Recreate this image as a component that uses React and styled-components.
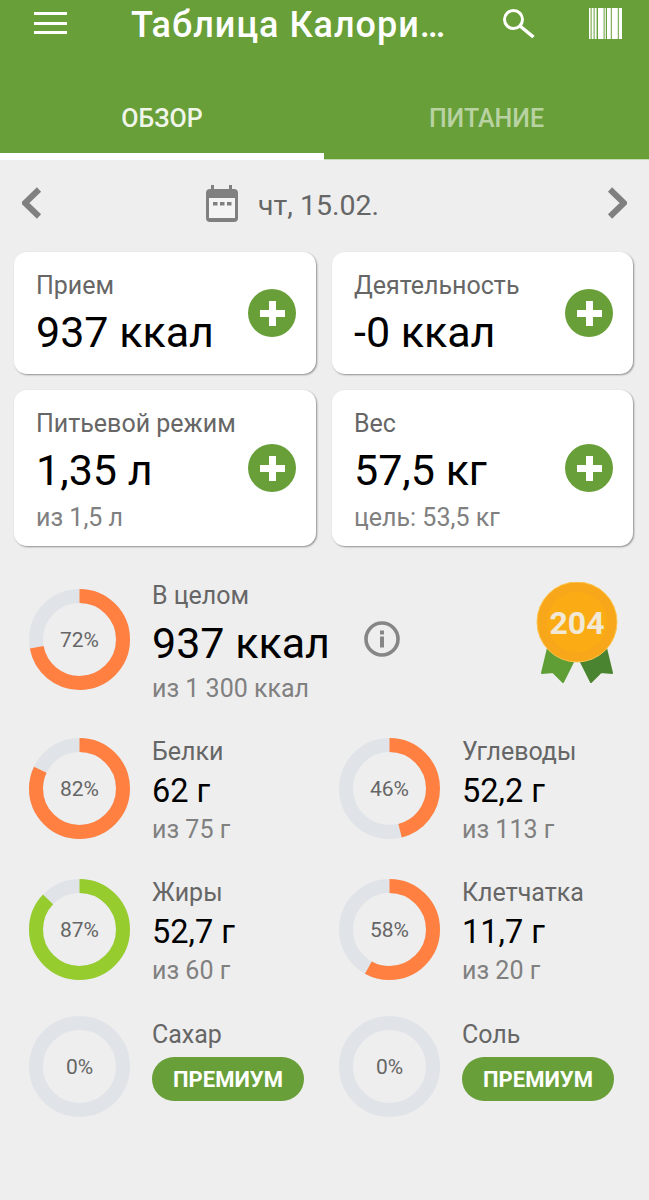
import React from 'react';
import styled, { createGlobalStyle } from 'styled-components';

const GlobalStyle = createGlobalStyle`
  html, body {
    margin: 0;
    padding: 0;
    background: #eeeeee;
  }
  * {
    box-sizing: border-box;
  }
`;

const Page = styled.div`
  width: 649px;
  min-height: 1200px;
  overflow: hidden;
  background: #eeeeee;
  font-family: "Roboto", "Liberation Sans", sans-serif;
`;

const Header = styled.header`
  background: #689f38;
  height: 160px;
  display: flex;
  flex-direction: column;
`;

const TopBar = styled.div`
  height: 50px;
  display: flex;
  align-items: center;
`;

const MenuButton = styled.div`
  margin-left: 34px;
  margin-top: -4px;
  width: 33px;
  height: 22px;
  display: flex;
  flex-direction: column;
  justify-content: space-between;
  > span {
    height: 3px;
    background: #fff;
  }
`;

const Title = styled.div`
  margin-left: 64px;
  width: 372px;
  color: #fff;
  font-size: 36px;
  font-weight: 500;
  letter-spacing: 1px;
  white-space: nowrap;
`;

const BarIcon = styled.svg`
  display: block;
  flex: none;
  margin-top: ${p => p.$top || 0}px;
  margin-left: ${p => p.$left || 0}px;
`;

const Tabs = styled.div`
  flex: 1;
  display: flex;
`;

const Tab = styled.div`
  width: ${p => (p.$active ? 324 : 325)}px;
  display: flex;
  align-items: flex-end;
  justify-content: center;
  color: ${p => (p.$active ? '#f0f5ea' : 'rgba(255, 255, 255, 0.55)')};
  font-size: 25px;
  font-weight: 500;
  line-height: 28px;
  padding-bottom: ${p => (p.$active ? 20 : 26)}px;
  border-bottom: ${p => (p.$active ? '7px solid #ffffff' : '1px solid #c5d9b3')};
`;

const DateRow = styled.div`
  height: 92px;
  padding: 0 22px 6px;
  display: flex;
  align-items: center;
  justify-content: space-between;
`;

const DateLabel = styled.div`
  display: flex;
  align-items: center;
  gap: 20px;
  margin-right: 64px;
  color: #666666;
  font-size: 28.5px;
`;

const DateText = styled.span`
  padding-top: 4px;
`;

const Cards = styled.div`
  padding: 0 16px 0 14px;
  display: grid;
  grid-template-columns: 302px 301px;
  grid-template-rows: 122px 156px;
  gap: 16px;
`;

const Card = styled.div`
  background: #fff;
  border-radius: 13px;
  box-shadow: 1px 1px 2px rgba(0, 0, 0, 0.4);
  padding: 0 20px 0 22px;
  display: flex;
  align-items: center;
  justify-content: space-between;
`;

const CardText = styled.div`
  padding-top: ${p => (p.$tall ? 5 : 3)}px;
`;

const Label = styled.div`
  color: #666666;
  font-size: 25px;
  line-height: 30px;
`;

const CardValue = styled.div`
  color: #000;
  font-size: 43px;
  line-height: 52px;
  margin-top: 5px;
`;

const Sub = styled.div`
  color: #808080;
  font-size: 25px;
  line-height: 30px;
  margin-top: ${p => p.$gap || 0}px;
`;

const PlusButton = styled.div`
  width: 48px;
  height: 48px;
  border-radius: 50%;
  background: #689f38;
  display: flex;
  align-items: center;
  justify-content: center;
  flex: none;
`;

const Summary = styled.div`
  padding: 43px 32px 0 29px;
  display: flex;
  align-items: flex-start;
`;

const SummaryBody = styled.div`
  margin-left: 22px;
  margin-top: -8px;
`;

const SummaryValue = styled.div`
  color: #000;
  font-size: 43px;
  line-height: 52px;
  margin-top: 6px;
  white-space: nowrap;
`;

const InfoIcon = styled.svg`
  display: block;
  flex: none;
  margin: 32px 0 0 34px;
`;

const Badge = styled.svg`
  display: block;
  flex: none;
  margin: -7px -2px 0 auto;
`;

const Nutrients = styled.div`
  padding: 34px 0 0 29px;
  display: grid;
  grid-template-columns: 310px 310px;
  grid-template-rows: 101px 101px 101px;
  row-gap: 40px;
`;

const Nutrient = styled.div`
  display: flex;
  align-items: flex-start;
  margin-top: ${p => (p.$premium ? -4 : 0)}px;
`;

const RingBox = styled.div`
  width: 101px;
  height: 101px;
  flex: none;
  display: grid;
  place-items: center;
  > * {
    grid-area: 1 / 1;
  }
`;

const RingText = styled.span`
  color: #666666;
  font-size: 21px;
`;

const NutrientBody = styled.div`
  margin-left: 22px;
  margin-top: ${p => (p.$premium ? 4 : -1)}px;
`;

const NutrientValue = styled.div`
  color: #000;
  font-size: 32.5px;
  line-height: 40px;
  margin-top: 4px;
`;

const PremiumButton = styled.div`
  margin-top: 7px;
  width: 152px;
  height: 44px;
  border-radius: 22px;
  background: #689f38;
  color: #fff;
  font-size: 22px;
  font-weight: 700;
  display: flex;
  align-items: center;
  justify-content: center;
`;

const Ring = ({ value, color = '#ff8040' }) => {
  const r = 43.5;
  const length = 2 * Math.PI * r;
  return (
    <RingBox>
      <svg width="101" height="101" viewBox="0 0 101 101">
        <circle cx="50.5" cy="50.5" r={r} fill="none" stroke="#e0e4e8" strokeWidth="14" />
        {value > 0 && (
          <circle
            cx="50.5"
            cy="50.5"
            r={r}
            fill="none"
            stroke={color}
            strokeWidth="14"
            strokeDasharray={`${(length * value) / 100} ${length}`}
            transform="rotate(-90 50.5 50.5)"
          />
        )}
      </svg>
      <RingText>{value}%</RingText>
    </RingBox>
  );
};

const Plus = () => (
  <PlusButton>
    <svg width="25" height="25" viewBox="0 0 25 25">
      <path d="M12.5 0v25M0 12.5h25" stroke="#fff" strokeWidth="7" fill="none" />
    </svg>
  </PlusButton>
);

const Chevron = ({ flip }) => (
  <svg width="20" height="32" viewBox="0 0 20 32">
    <path
      d={flip ? 'M3 2.5 17 16 3 29.5' : 'M17 2.5 3 16 17 29.5'}
      stroke="#808080"
      strokeWidth="6"
      fill="none"
    />
  </svg>
);

const nutrients = [
  { name: 'Белки', value: 82, amount: '62 г', goal: 'из 75 г' },
  { name: 'Углеводы', value: 46, amount: '52,2 г', goal: 'из 113 г' },
  { name: 'Жиры', value: 87, amount: '52,7 г', goal: 'из 60 г', color: '#97cc2f' },
  { name: 'Клетчатка', value: 58, amount: '11,7 г', goal: 'из 20 г' },
  { name: 'Сахар', value: 0, premium: true },
  { name: 'Соль', value: 0, premium: true },
];

const barcodeBars = [
  [0, 1.6], [2.6, 2], [5.6, 2], [9, 5.6], [15.6, 1.2], [18, 3.8], [22.8, 6], [29.8, 3.2],
];

export default function App() {
  return (
    <Page>
      <GlobalStyle />
      <Header>
        <TopBar>
          <MenuButton>
            <span />
            <span />
            <span />
          </MenuButton>
          <Title>Таблица Калори…</Title>
          <BarIcon $top={-4} width="32" height="30" viewBox="0 0 32 30">
            <circle cx="10.5" cy="11.5" r="9" stroke="#fff" strokeWidth="3" fill="none" />
            <path d="M17 18 30.5 29" stroke="#fff" strokeWidth="3.5" fill="none" />
          </BarIcon>
          <BarIcon $left={54} $top={-3} width="33" height="31" viewBox="0 0 33 31">
            {barcodeBars.map(([x, w]) => (
              <rect key={x} x={x} y="0" width={w} height="31" fill="#fff" />
            ))}
          </BarIcon>
        </TopBar>
        <Tabs>
          <Tab $active>ОБЗОР</Tab>
          <Tab>ПИТАНИЕ</Tab>
        </Tabs>
      </Header>

      <DateRow>
        <Chevron />
        <DateLabel>
          <svg width="32" height="37" viewBox="0 0 32 37">
            <path
              d="M5 0h3v4h15V0h3v4h2a4 4 0 0 1 4 4v25a4 4 0 0 1-4 4H4a4 4 0 0 1-4-4V8a4 4 0 0 1 4-4h1z"
              fill="#808080"
            />
            <rect x="3" y="13" width="26" height="20" fill="#f4f4f4" />
            <rect x="7" y="17" width="4.5" height="3.5" fill="#808080" />
            <rect x="14" y="17" width="4.5" height="3.5" fill="#808080" />
            <rect x="21" y="17" width="4.5" height="3.5" fill="#808080" />
          </svg>
          <DateText>чт, 15.02.</DateText>
        </DateLabel>
        <Chevron flip />
      </DateRow>

      <Cards>
        <Card>
          <CardText>
            <Label>Прием</Label>
            <CardValue>937 ккал</CardValue>
          </CardText>
          <Plus />
        </Card>
        <Card>
          <CardText>
            <Label>Деятельность</Label>
            <CardValue>-0 ккал</CardValue>
          </CardText>
          <Plus />
        </Card>
        <Card>
          <CardText $tall>
            <Label>Питьевой режим</Label>
            <CardValue>1,35 л</CardValue>
            <Sub $gap={7}>из 1,5 л</Sub>
          </CardText>
          <Plus />
        </Card>
        <Card>
          <CardText $tall>
            <Label>Вес</Label>
            <CardValue>57,5 кг</CardValue>
            <Sub $gap={7}>цель: 53,5 кг</Sub>
          </CardText>
          <Plus />
        </Card>
      </Cards>

      <Summary>
        <Ring value={72} />
        <SummaryBody>
          <Label>В целом</Label>
          <SummaryValue>937 ккал</SummaryValue>
          <Sub $gap={5}>из 1 300 ккал</Sub>
        </SummaryBody>
        <InfoIcon width="36" height="36" viewBox="0 0 36 36">
          <circle cx="18" cy="18" r="16" stroke="#868686" strokeWidth="3.6" fill="none" />
          <rect x="16" y="15.5" width="4" height="11" fill="#868686" />
          <rect x="16" y="9.5" width="4" height="4" fill="#868686" />
        </InfoIcon>
        <Badge width="84" height="102" viewBox="0 0 84 102">
          <path d="M13 66 7 91 18 90 28 100 38 80z" fill="#5f9e35" stroke="#5f9e35" strokeWidth="2" strokeLinejoin="round" />
          <path d="M71 66 77 91 66 90 56 100 46 80z" fill="#4b8430" stroke="#4b8430" strokeWidth="2" strokeLinejoin="round" />
          <circle cx="42" cy="40" r="40" fill="#f8a71a" stroke="#fcc44a" strokeWidth="1" />
          <circle cx="42" cy="40" r="30" fill="#fbac14" />
          <text
            x="42"
            y="51.5"
            textAnchor="middle"
            fontFamily="Roboto, sans-serif"
            fontSize="32"
            fontWeight="700"
            fill="#f1e8d6"
          >
            204
          </text>
        </Badge>
      </Summary>

      <Nutrients>
        {nutrients.map(n => (
          <Nutrient key={n.name} $premium={n.premium}>
            <Ring value={n.value} color={n.color} />
            <NutrientBody $premium={n.premium}>
              <Label>{n.name}</Label>
              {n.premium ? (
                <PremiumButton>ПРЕМИУМ</PremiumButton>
              ) : (
                <>
                  <NutrientValue>{n.amount}</NutrientValue>
                  <Sub $gap={4}>{n.goal}</Sub>
                </>
              )}
            </NutrientBody>
          </Nutrient>
        ))}
      </Nutrients>
    </Page>
  );
}
